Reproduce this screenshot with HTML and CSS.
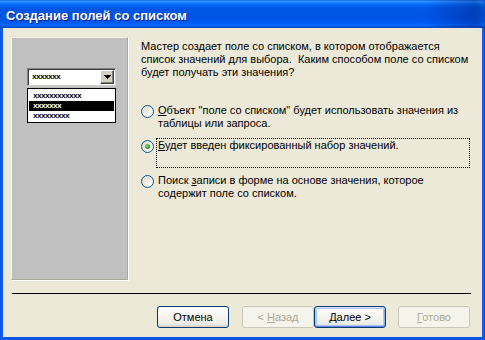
FILE: index.html
```html
<!DOCTYPE html>
<html lang="ru">
<head>
<meta charset="UTF-8">
<title>Создание полей со списком</title>
<link rel="stylesheet" href="styles.css">
</head>
<body>
<div class="window">
  <div class="titlebar">Создание полей со списком</div>
  <div class="frame">
    <div class="content">
      <div class="preview">
        <div class="combo">
          <span class="xs">xxxxxxx</span>
          <span class="drop"><svg width="7" height="4" viewBox="0 0 7 4" shape-rendering="crispEdges"><path d="M0 0h7v1h-1v1h-1v1h-1v1h-1v-1h-1v-1h-1v-1h-1z" fill="#000"/></svg></span>
        </div>
        <ul class="list">
          <li>xxxxxxxxxxxx</li>
          <li class="sel">xxxxxxx</li>
          <li>xxxxxxxxx</li>
        </ul>
      </div>
      <div class="main">
        <p class="intro">Мастер создает поле со списком, в котором отображается<br>список значений для выбора.&nbsp; Каким способом поле со списком<br>будет получать эти значения?</p>
        <div class="options">
          <label class="option"><span class="radio"></span><span class="caption"><u>О</u>бъект "поле со списком" будет использовать значения из<br>таблицы или запроса.</span></label>
          <label class="option"><span class="radio checked"></span><span class="caption focus"><u>Б</u>удет введен фиксированный набор значений.</span></label>
          <label class="option"><span class="radio"></span><span class="caption">Поиск <u>з</u>аписи в форме на основе значения, которое<br>содержит поле со списком.</span></label>
        </div>
      </div>
    </div>
    <div class="separator"></div>
    <div class="buttons">
      <button class="btn"><span>Отмена</span></button>
      <button class="btn back" disabled><span>&lt; <u>Н</u>азад</span></button>
      <button class="btn default"><span><u>Д</u>алее &gt;</span></button>
      <button class="btn finish" disabled><span><u>Г</u>отово</span></button>
    </div>
  </div>
</div>
</body>
</html>
```

FILE: styles.css
```css
body{margin:0;background:#fff;font-family:"Liberation Sans",Arial,sans-serif;font-size:11px;color:#000;}
.window{width:485px;height:340px;display:flex;flex-direction:column;background:linear-gradient(90deg,#0842C8 0,#1668FF 1px,#0A54E6 2px,#0A54E6 482px,#1668FF 483px,#0842C8 485px);}
.titlebar{height:28px;box-sizing:border-box;padding:4px 0 0 6px;line-height:24px;font-weight:bold;font-size:13px;color:#fff;text-shadow:1px 1px #0A1C8C;border-radius:0 6px 0 0;
  background:linear-gradient(90deg,rgba(0,0,0,0) 88%,rgba(0,20,110,0.35) 98%,rgba(0,0,0,0.1) 100%),
  linear-gradient(#0058EE 0,#3593FF 1px,#288EFF 2px,#127DFF 3px,#036FFC 4px,#0262EE 6px,#0057E5 8px,#0054E3 16px,#0055EB 20px,#005BF5 23px,#026AFE 25px,#0062EF 26px,#0052D6 27px,#0040AB 28px);}
.frame{flex:1;display:flex;flex-direction:column;background:#ECE9D8;margin:0 3px 3px;}
.content{display:flex;padding:9px 0 0 8px;}
.preview{width:117px;height:243px;box-sizing:border-box;background:#C0C0C0;border:1px solid;border-color:#F4F2EA #ACA899 #ACA899 #F4F2EA;box-shadow:1px 1px 0 #fff;padding:30px 0 0 15px;}
.combo{width:89px;height:18px;box-sizing:border-box;background:#fff;border:1px solid;border-color:#808080 #D4D0C8 #D4D0C8 #808080;box-shadow:inset 1px 1px #404040;display:flex;justify-content:space-between;padding:1px 1px 1px 4px;}
.xs,.list li{font:bold 8px "Liberation Mono",monospace;letter-spacing:-0.8px;}
.xs{line-height:14px;}
.drop{width:14px;height:14px;box-sizing:border-box;background:#D4D0C8;border:1px solid;border-color:#fff #404040 #404040 #fff;box-shadow:inset -1px -1px #808080;display:flex;align-items:center;justify-content:center;}
.list{list-style:none;margin:2px 0 0;width:89px;box-sizing:border-box;background:#fff;border:1px solid #000;padding:2px 1px 1px;}
.list li{height:10px;line-height:10px;padding-left:4px;}
.list li.sel{background:#000;color:#fff;}
.main{margin-left:13px;}
.intro{margin:3px 0 0;line-height:13px;white-space:nowrap;}
.options{margin-top:24px;display:flex;flex-direction:column;gap:5px;}
.option{display:flex;align-items:flex-start;}
.radio{width:13px;height:13px;box-sizing:border-box;border-radius:50%;border:1px solid #1C5180;background:linear-gradient(135deg,#DCDBD3 10%,#F4F3EE 60%,#fff);margin:2px 2px 0 0;position:relative;}
.radio.checked::after{content:"";position:absolute;left:3px;top:3px;width:5px;height:5px;border-radius:50%;background:radial-gradient(circle at 40% 40%,#8BE28B,#21A121 60%,#187818);}
.caption{width:314px;height:30px;box-sizing:border-box;border:1px solid transparent;padding:0 1px;line-height:13px;white-space:nowrap;}
.caption.focus{border:1px dotted #000;}
.separator{height:1px;width:459px;background:#000;margin:13px 0 0 9px;}
.buttons{display:flex;margin:12px 0 0 154px;}
.btn{width:72px;height:22px;box-sizing:border-box;border:1px solid #003C74;border-radius:3px;background:linear-gradient(#fff,#F4F3EE 55%,#ECEBE6 85%,#D6D0C5);font:11px "Liberation Sans",Arial,sans-serif;color:#000;padding:0;display:flex;align-items:center;justify-content:center;}
.btn.back{margin-left:13px;}
.btn.finish{margin-left:12px;}
.btn:disabled{border-color:#C9C7BA;color:#ACA899;background:#F5F4EA;}
.btn.default{box-shadow:inset 0 1px #CEE7FF,inset 0 -1px #6982EE,inset 1px 0 #B0CCF4,inset -1px 0 #89ADE4,inset 0 0 0 2px #A9C6F2;}
```
